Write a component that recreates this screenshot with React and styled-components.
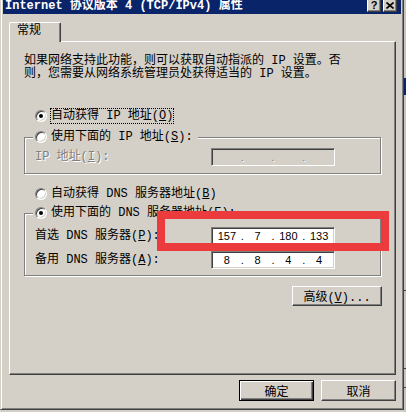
import React from "react";
import styled, { createGlobalStyle, css } from "styled-components";

const face = "#d4d0c8";

const GlobalStyle = createGlobalStyle`
  html, body {
    margin: 0;
    padding: 0;
    background: ${face};
  }
  body {
    font-family: "Liberation Mono", "Noto Sans CJK SC", monospace;
    font-size: 12px;
    color: #000;
  }
`;

const Screen = styled.div`
  display: flex;
  width: 406px;
  height: 412px;
  overflow: hidden;
`;

const Dialog = styled.div`
  position: relative;
  flex: none;
  width: 404px;
  height: 410px;
  box-sizing: border-box;
  background: ${face};
  border-left: 1px solid ${face};
  border-right: 1px solid #404040;
  border-bottom: 1px solid #404040;
  box-shadow: inset 1px 0 #fff, inset -1px 0 #808080, inset 0 -1px #808080;
  padding: 0 2px;
  display: flex;
  flex-direction: column;
`;

const Backdrop = styled.div`
  flex: 1;
  background: #c8c5bd;
  display: flex;
  flex-direction: column;
`;

const BackdropMark = styled.div`
  flex: none;
  margin-top: ${p => p.$top}px;
  height: ${p => p.$h}px;
  background: ${p => p.$color};
`;

const TitleBar = styled.div`
  flex: none;
  height: 14px;
  background: #0a246a;
  display: flex;
  align-items: flex-start;
  justify-content: space-between;
  padding: 0 4px 0 2px;
`;

const TitleText = styled.div`
  color: #fff;
  font-weight: bold;
  font-size: 12px;
  line-height: 12px;
  white-space: nowrap;
`;

const CaptionButtons = styled.div`
  display: flex;
  gap: 2px;
`;

const CaptionButton = styled.div`
  width: 14px;
  height: 12px;
  box-sizing: border-box;
  background: ${face};
  border-left: 1px solid #fff;
  border-right: 1px solid #404040;
  border-bottom: 1px solid #404040;
  box-shadow: inset -1px -1px #808080;
  display: flex;
  align-items: center;
  justify-content: center;
  font-family: "Liberation Sans", sans-serif;
  font-weight: bold;
  font-size: 11px;
  line-height: 11px;
`;

const Body = styled.div`
  display: flex;
  flex-direction: column;
  padding: 8px 5px 0 6px;
`;

const TabStrip = styled.div`
  display: flex;
`;

const Tab = styled.div`
  position: relative;
  z-index: 1;
  width: 52px;
  height: 20px;
  box-sizing: border-box;
  margin-bottom: -1px;
  background: ${face};
  border-top: 1px solid #fff;
  border-left: 1px solid #fff;
  border-right: 1px solid #404040;
  border-radius: 2px 2px 0 0;
  box-shadow: inset -1px 0 #808080;
  padding-left: 7px;
  line-height: 17px;
`;

const Panel = styled.div`
  height: 334px;
  box-sizing: border-box;
  border-top: 1px solid #fff;
  border-left: 1px solid #fff;
  border-right: 1px solid #404040;
  border-bottom: 1px solid #404040;
  box-shadow: inset -1px -1px #808080;
  padding: 13px 13px 0 14px;
  display: flex;
  flex-direction: column;
`;

const Description = styled.p`
  margin: 0 0 27px;
  line-height: 13px;
  white-space: nowrap;
`;

const OptionRow = styled.div`
  display: flex;
  align-items: center;
  height: 16px;
  gap: 3px;
  padding-left: ${p => (p.$indent ? 11 : 0)}px;
  margin-top: ${p => p.$top || 0}px;
`;

const Radio = styled.span`
  position: relative;
  flex: none;
  width: 12px;
  height: 12px;
  box-sizing: border-box;
  border-radius: 50%;
  background: #fff;
  border: 1px solid;
  border-color: #808080 #fff #fff #808080;
  box-shadow: inset 1px 1px #404040, inset -1px -1px ${face};
  ${p =>
    p.$checked &&
    css`
      &::after {
        content: "";
        position: absolute;
        left: 3px;
        top: 3px;
        width: 4px;
        height: 4px;
        border-radius: 50%;
        background: #000;
      }
    `}
`;

const OptionLabel = styled.span`
  border: 1px dotted ${p => (p.$focused ? "#000" : "transparent")};
  line-height: 14px;
  white-space: nowrap;
`;

const Group = styled.fieldset`
  margin: ${p => p.$top}px 1px 0 0;
  padding: 0 0 ${p => p.$bottom}px 8px;
  min-width: 0;
  border: 1px solid #808080;
  box-shadow: inset 1px 1px #fff, 1px 1px #fff;
`;

const Legend = styled.legend`
  padding: 0 4px 0 2px;
  background: ${face};
`;

const FieldRow = styled.div`
  display: grid;
  grid-template-columns: 176px 124px;
  align-items: center;
  height: 18px;
  margin-top: ${p => p.$top}px;
  padding-left: 2px;
`;

const FieldLabel = styled.span`
  white-space: nowrap;
  line-height: 14px;
  ${p =>
    p.$disabled &&
    css`
      color: #808080;
      text-shadow: 1px 1px #fff;
    `}
`;

const IpBox = styled.div`
  display: flex;
  height: 18px;
  box-sizing: border-box;
  background: ${p => (p.$disabled ? face : "#fff")};
  border: 1px solid;
  border-color: #808080 #fff #fff #808080;
  box-shadow: inset 1px 1px #404040, inset -1px -1px ${face};
  padding: 0 1px;
  overflow: hidden;
  font-family: "Liberation Sans", sans-serif;
  font-size: 11px;
  line-height: 16px;
`;

const IpSegment = styled.span`
  flex: 1;
  text-align: center;
`;

const IpDot = styled.span`
  flex: none;
  width: 3px;
  text-align: center;
  ${p =>
    p.$disabled &&
    css`
      color: #808080;
      text-shadow: 1px 1px #fff;
    `}
`;

const Button = styled.button`
  width: ${p => p.$w}px;
  height: ${p => p.$h}px;
  box-sizing: border-box;
  margin: 0;
  padding: 0;
  background: ${face};
  font: inherit;
  color: #000;
  border: 1px solid;
  border-color: #fff #404040 #404040 #fff;
  box-shadow: inset -1px -1px #808080;
  ${p =>
    p.$default &&
    css`
      border-color: #000;
      box-shadow: inset 1px 1px #fff, inset -1px -1px #404040, inset -2px -2px #808080;
    `}
`;

const AdvancedButton = styled(Button)`
  align-self: flex-end;
  margin-top: 10px;
`;

const ButtonBar = styled.div`
  display: flex;
  justify-content: flex-end;
  gap: 7px;
  margin-top: 5px;
`;

const Callout = styled.div`
  position: absolute;
  left: 156px;
  top: 211px;
  width: 232px;
  height: 40px;
  box-sizing: border-box;
  border: 8px solid #ec3b3c;
`;

const IpField = ({ parts = ["", "", "", ""], disabled }) => (
  <IpBox $disabled={disabled}>
    {parts.map((part, i) => (
      <React.Fragment key={i}>
        {i > 0 && <IpDot $disabled={disabled}>.</IpDot>}
        <IpSegment>{part}</IpSegment>
      </React.Fragment>
    ))}
  </IpBox>
);

const Option = ({ checked, focused, indent, top, children }) => (
  <OptionRow $indent={indent} $top={top}>
    <Radio $checked={checked} />
    <OptionLabel $focused={focused}>{children}</OptionLabel>
  </OptionRow>
);

const CloseGlyph = () => (
  <svg width="8" height="7" viewBox="0 0 8 7">
    <path d="M0.5 0.5 L7.5 6.5 M7.5 0.5 L0.5 6.5" stroke="#000" strokeWidth="1.6" />
  </svg>
);

const App = () => (
  <Screen>
    <GlobalStyle />
    <Dialog>
      <TitleBar>
        <TitleText>Internet 协议版本 4 (TCP/IPv4) 属性</TitleText>
        <CaptionButtons>
          <CaptionButton>?</CaptionButton>
          <CaptionButton>
            <CloseGlyph />
          </CaptionButton>
        </CaptionButtons>
      </TitleBar>
      <Body>
        <TabStrip>
          <Tab>常规</Tab>
        </TabStrip>
        <Panel>
          <Description>
            如果网络支持此功能，则可以获取自动指派的 IP 设置。否
            <br />
            则，您需要从网络系统管理员处获得适当的 IP 设置。
          </Description>
          <Option indent checked focused>
            自动获得 IP 地址(<u>O</u>)
          </Option>
          <Group $top={5} $bottom={7}>
            <Legend>
              <Option>使用下面的 IP 地址(<u>S</u>):</Option>
            </Legend>
            <FieldRow $top={3}>
              <FieldLabel $disabled>IP 地址(<u>I</u>):</FieldLabel>
              <IpField disabled />
            </FieldRow>
          </Group>
          <Option indent top={12}>
            自动获得 DNS 服务器地址(<u>B</u>)
          </Option>
          <Group $top={3} $bottom={6}>
            <Legend>
              <Option checked>使用下面的 DNS 服务器地址(<u>E</u>):</Option>
            </Legend>
            <FieldRow $top={6}>
              <FieldLabel>首选 DNS 服务器(<u>P</u>):</FieldLabel>
              <IpField parts={["157", "7", "180", "133"]} />
            </FieldRow>
            <FieldRow $top={6}>
              <FieldLabel>备用 DNS 服务器(<u>A</u>):</FieldLabel>
              <IpField parts={["8", "8", "4", "4"]} />
            </FieldRow>
          </Group>
          <AdvancedButton $w={90} $h={20}>
            高级(<u>V</u>)...
          </AdvancedButton>
        </Panel>
        <ButtonBar>
          <Button $w={75} $h={21} $default>
            确定
          </Button>
          <Button $w={75} $h={21}>
            取消
          </Button>
        </ButtonBar>
      </Body>
      <Callout />
    </Dialog>
    <Backdrop>
      <BackdropMark $top={78} $h={17} $color="#0a246a" />
      <BackdropMark $top={195} $h={1} $color="#404040" />
      <BackdropMark $top={77} $h={1} $color="#404040" />
      <BackdropMark $top={18} $h={1} $color="#404040" />
    </Backdrop>
  </Screen>
);

export default App;
